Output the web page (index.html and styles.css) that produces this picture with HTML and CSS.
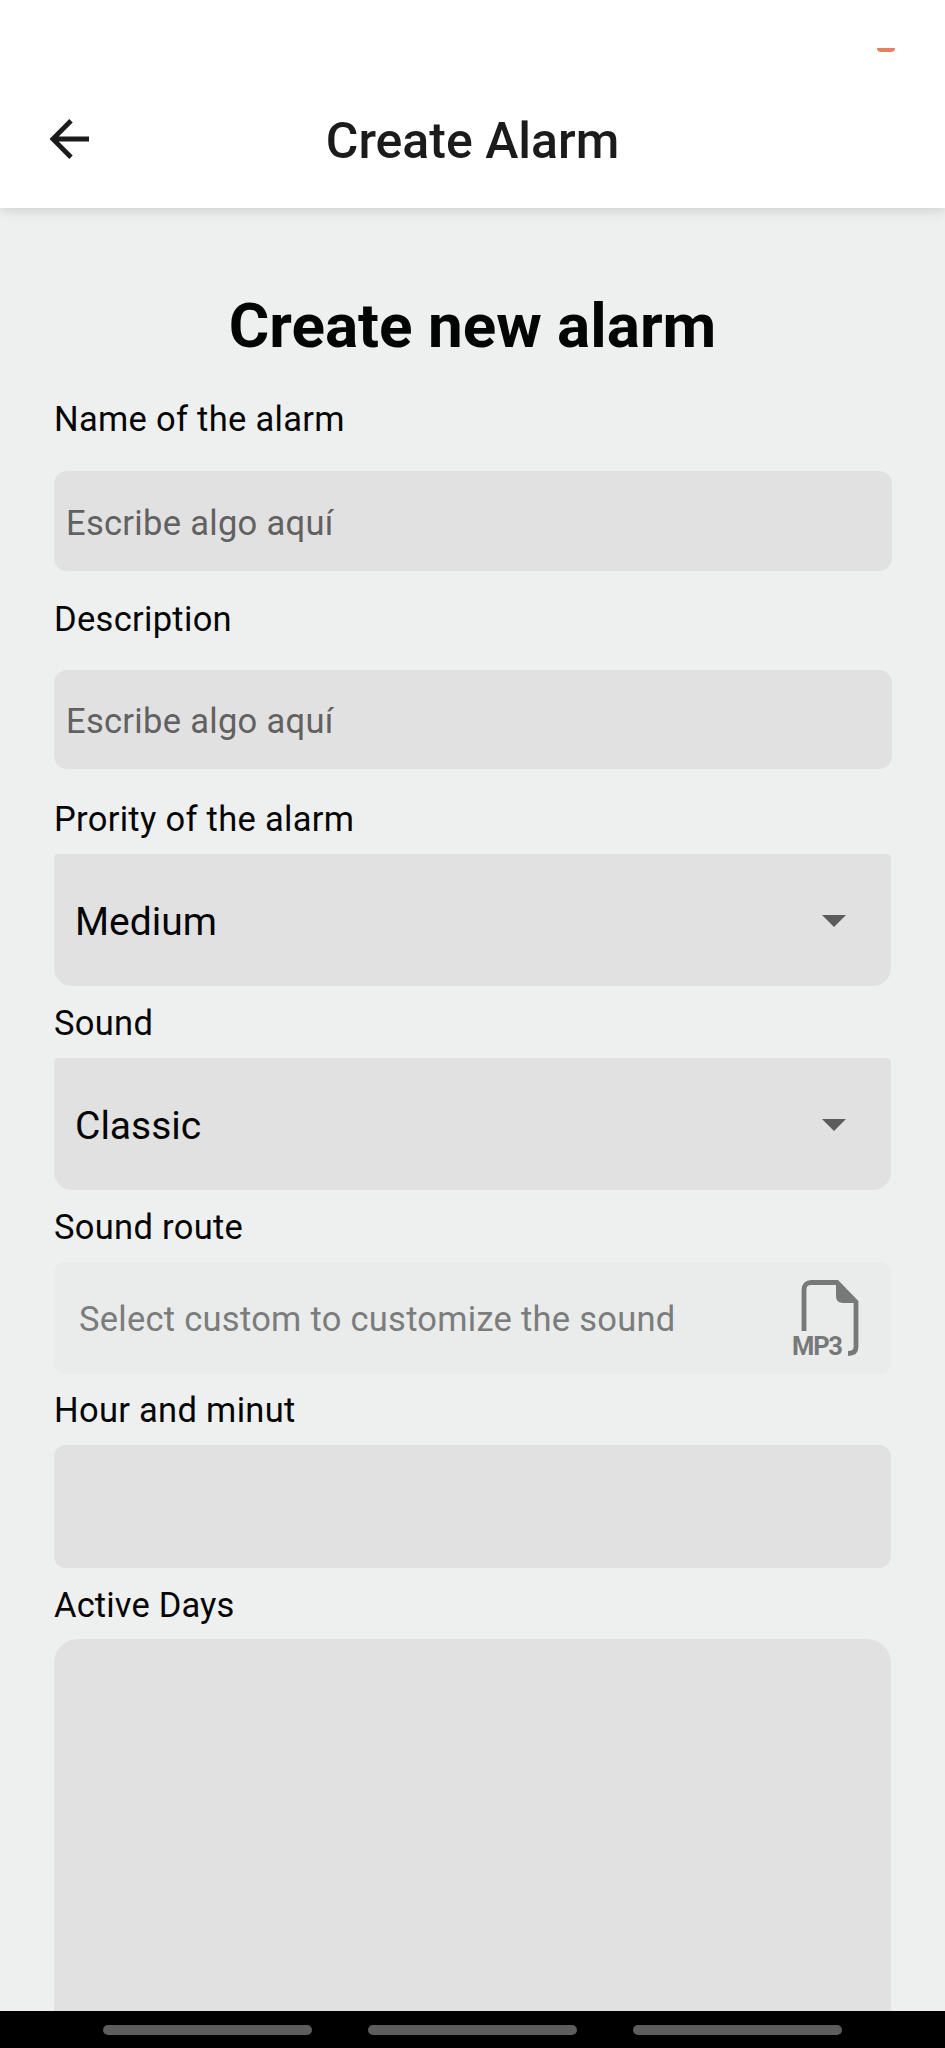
FILE: index.html
```html
<!DOCTYPE html>
<html lang="en">
<head>
<meta charset="utf-8">
<title>Create Alarm</title>
<link rel="stylesheet" href="styles.css">
</head>
<body>
<div class="screen">
  <header class="appbar">
    <div class="status"><span class="status-mark"></span></div>
    <div class="toolbar">
      <svg class="back" viewBox="0 0 40 40" fill="none" stroke="#1c1b1c" stroke-width="4.8"><path d="M39 20H4M21 1.8 2.8 20 21 38.2"/></svg>
      <div class="toolbar-title">Create Alarm</div>
    </div>
  </header>
  <main class="form">
    <h1 class="title">Create new alarm</h1>
    <label class="label label-name">Name of the alarm</label>
    <div class="field field-name">Escribe algo aquí</div>
    <label class="label label-description">Description</label>
    <div class="field field-description">Escribe algo aquí</div>
    <label class="label label-priority">Prority of the alarm</label>
    <div class="select">Medium<svg class="caret" viewBox="0 0 24 12"><path d="M0 0h24L12 12z" fill="#5c5c5c"/></svg></div>
    <label class="label">Sound</label>
    <div class="select">Classic<svg class="caret" viewBox="0 0 24 12"><path d="M0 0h24L12 12z" fill="#5c5c5c"/></svg></div>
    <label class="label">Sound route</label>
    <div class="route"><span>Select custom to customize the sound</span>
      <svg class="mp3" viewBox="0 0 68 78" fill="none"><path d="M13 52V11Q13 3.500 20.500 3.500H46L65 23V68Q65 74.500 57 74.500" stroke="#777978" stroke-width="4.800"/><path d="M45 2V17Q45 24 52 24H67z" fill="#777978"/><text class="mp3-text" x="1" y="75.500" textLength="51" fill="#777978">MP3</text></svg>
    </div>
    <label class="label label-hour">Hour and minut</label>
    <div class="time"></div>
    <label class="label label-days">Active Days</label>
    <div class="days"></div>
  </main>
  <nav class="navbar"><span class="pill"></span><span class="pill"></span><span class="pill"></span></nav>
</div>
</body>
</html>
```

FILE: styles.css
```css
* { box-sizing: border-box; }
body { margin: 0; background: #eef0ef; font-family: Roboto, "Liberation Sans", sans-serif; color: #050505; }
.screen { display: flex; flex-direction: column; width: 945px; height: 2048px; overflow: hidden; }
.appbar { position: relative; flex: none; height: 208px; background: #fff; box-shadow: 0 2px 12px rgba(0,0,0,.15); }
.status { display: flex; justify-content: flex-end; height: 76px; padding: 48px 50px 0 0; }
.status-mark { width: 18px; height: 4px; background: #e5815f; border-radius: 0 0 4px 4px; }
.toolbar { display: grid; grid-template-columns: 100px 1fr 100px; height: 132px; }
.back { width: 40px; height: 40px; margin: 43px 0 0 50px; }
.toolbar-title { margin-top: 35px; text-align: center; font-size: 50px; line-height: 60px; font-weight: 500; color: #1c1b1c; white-space: nowrap; }
.form { flex: 1; min-height: 0; overflow: hidden; display: flex; flex-direction: column; padding: 80px 54px 0; }
.title { flex: none; height: 76px; margin: 0; text-align: center; font-size: 62px; line-height: 76px; font-weight: 700; white-space: nowrap; color: #030504; }
.label { flex: none; height: 40px; margin: 17px 0 15px; font-size: 34.5px; line-height: 40px; letter-spacing: .3px; white-space: nowrap; }
.label-name { margin: 35px 0 32px; }
.label-description { margin: 28px 0 31px; }
.label-priority { margin: 30px 0 15px; }
.label-hour { margin: 16px 0 15px; }
.label-days { margin: 17px 0 14px; letter-spacing: .15px; }
.field { flex: none; display: flex; align-items: center; height: 100px; margin: 0 -.5px; padding: 3px 0 0 12.5px; background: #e1e1e1; border-radius: 13px; color: #616161; font-size: 34.5px; letter-spacing: .3px; }
.field-description { height: 99px; }
.select { flex: none; display: flex; align-items: center; justify-content: space-between; height: 132px; padding: 3px 45px 0 21px; background: #e1e1e1; border-radius: 4px 4px 18px 18px; font-size: 39px; }
.caret { width: 24px; height: 12px; margin-top: -1px; }
.route { flex: none; display: flex; align-items: center; justify-content: space-between; height: 112px; padding: 0 32px 0 25px; background: #eaebeb; border-radius: 10px; color: #7b7d7c; font-size: 34.5px; letter-spacing: .27px; white-space: nowrap; }
.route span { padding-top: 2px; }
.mp3 { width: 68px; height: 78px; overflow: visible; }
.mp3-text { font: 700 25.5px Roboto, sans-serif; letter-spacing: 0; }
.time { flex: none; height: 123px; background: #e1e1e1; border-radius: 12px; }
.days { flex: 1; background: #e1e1e1; border-radius: 24px 24px 0 0; }
.navbar { flex: none; display: flex; justify-content: center; gap: 56px; height: 37px; padding-top: 14px; background: #000; }
.pill { width: 209px; height: 10px; border-radius: 5px; background: #5d5d5d; }
```
